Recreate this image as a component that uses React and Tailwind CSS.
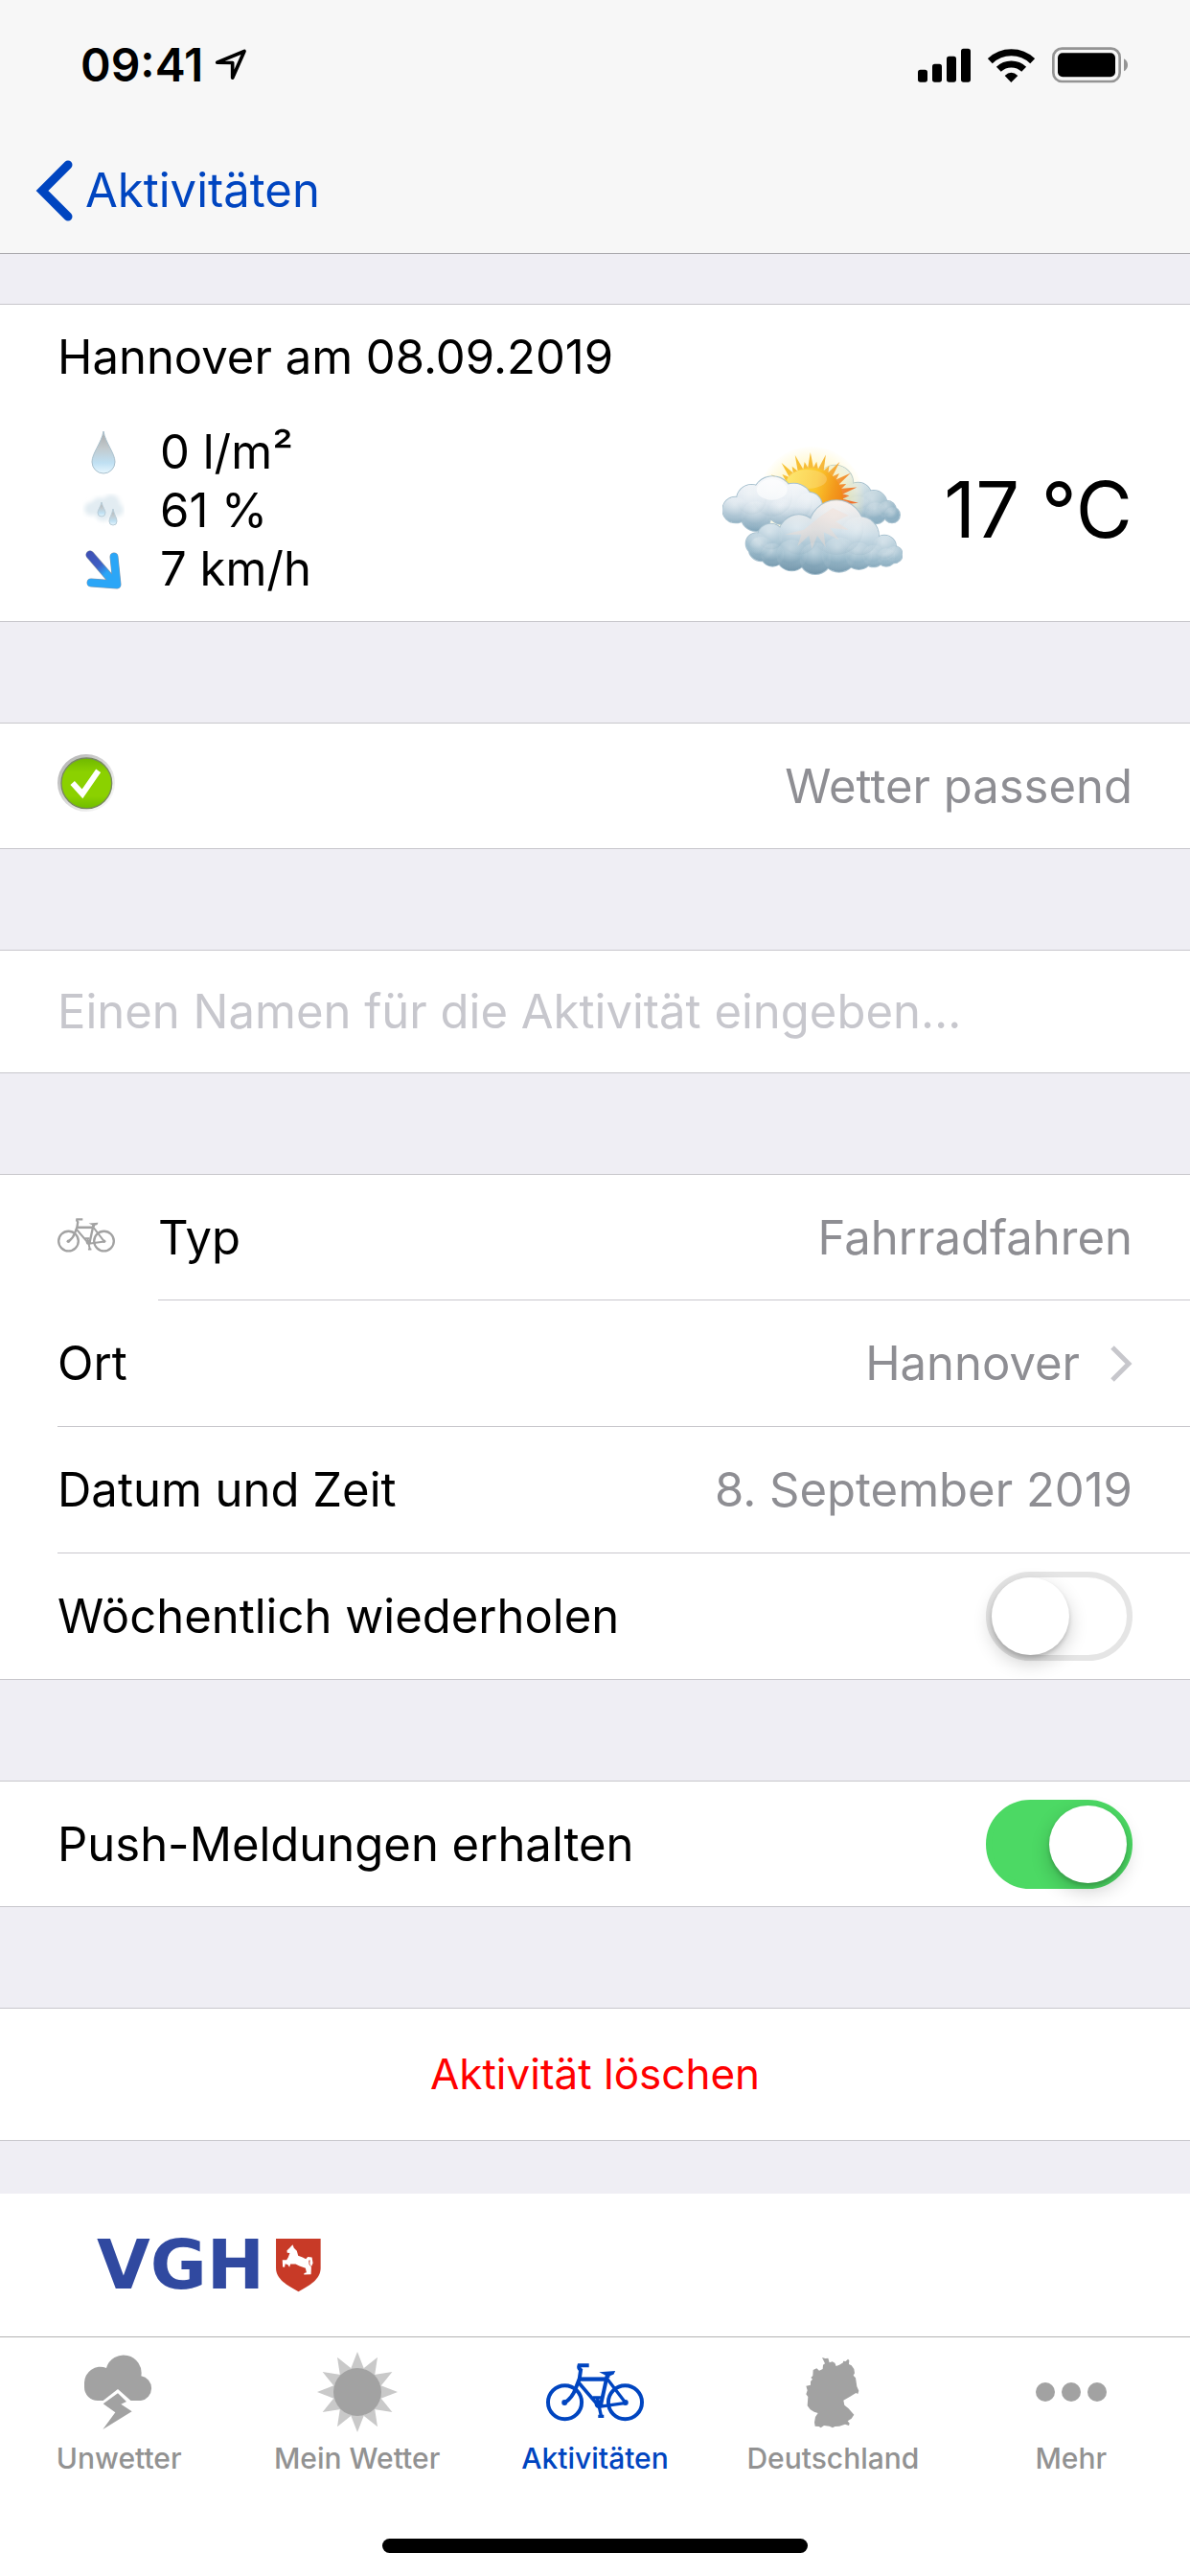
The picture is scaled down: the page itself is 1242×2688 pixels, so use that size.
import React, { useState } from 'react';

// ─── Status bar icons ─────────────────────────────────────────────────────────

const LocationIcon = () => (
  <svg width="34" height="33" viewBox="672 154 102 98" fill="none" aria-hidden="true">
    <path d="M680 196 L765 161 L728 244 V197 Z" stroke="#000" strokeWidth="11" strokeLinejoin="round" />
  </svg>
);

const SignalIcon = () => (
  <svg width="55" height="36" viewBox="174 88 165 108" aria-hidden="true">
    <rect x="174" y="156" width="30" height="39" rx="8" />
    <rect x="219" y="138" width="30" height="57" rx="8" />
    <rect x="264" y="114" width="30" height="81" rx="8" />
    <rect x="309" y="90" width="30" height="105" rx="8" />
  </svg>
);

const WifiIcon = () => (
  <svg width="49" height="36" viewBox="393 87 147 108" fill="none" aria-hidden="true">
    <path d="M400 128 A96 96 0 0 1 533 128" stroke="#000" strokeWidth="21" />
    <path d="M427 154 A57 57 0 0 1 506 154" stroke="#000" strokeWidth="21" />
    <path d="M446 174 Q466 155 487 174 L466 195 Z" fill="#000" />
  </svg>
);

const BatteryIcon = () => (
  <svg width="79" height="38" viewBox="594 86 237 114" aria-hidden="true">
    <rect x="598" y="91" width="208" height="103" rx="27" fill="none" stroke="#949494" strokeWidth="8" />
    <rect x="612" y="105" width="180" height="75" rx="15" />
    <path d="M819 123 Q831 130 831 142 Q831 155 819 162 Z" fill="#949494" />
  </svg>
);

// ─── Weather icons ────────────────────────────────────────────────────────────

const DropIcon = () => (
  <svg width="26" height="46" viewBox="0 0 26 46" aria-hidden="true">
    <defs>
      <linearGradient id="drop" x1="0" y1="0" x2="0" y2="1">
        <stop offset="0" stopColor="#a9a9a9" />
        <stop offset="0.4" stopColor="#c2cace" />
        <stop offset="0.75" stopColor="#bfe0f3" />
        <stop offset="1" stopColor="#e8f7fe" />
      </linearGradient>
    </defs>
    <path d="M13 1 C15 13 25 24 25 33 A12 12 0 0 1 1 33 C1 24 11 13 13 1 Z" fill="url(#drop)" stroke="#a9c0cd" />
  </svg>
);

const HumidityIcon = () => (
  <svg width="44" height="36" viewBox="0 0 44 36" aria-hidden="true">
    <defs>
      <filter id="mist" x="-20%" y="-20%" width="140%" height="140%">
        <feGaussianBlur stdDeviation="2" />
      </filter>
    </defs>
    <g fill="#e2ecf2" filter="url(#mist)">
      <circle cx="9" cy="16" r="7" />
      <circle cx="18" cy="13" r="9" />
      <circle cx="30" cy="10" r="9" />
      <circle cx="36" cy="17" r="7" />
      <circle cx="22" cy="20" r="9" />
    </g>
    <path d="M20 9 C21 14 24 17 24 20 A4 4 0 0 1 16 20 C16 17 19 14 20 9 Z" fill="url(#drop)" stroke="#b9cdd8" />
    <path d="M32 16 C33 22 36 25 36 29 A4 4 0 0 1 28 29 C28 25 31 22 32 16 Z" fill="url(#drop)" stroke="#b9cdd8" />
  </svg>
);

const WindIcon = () => (
  <svg width="42" height="42" viewBox="0 0 42 42" fill="none" aria-hidden="true">
    <defs>
      <linearGradient id="wind" gradientUnits="userSpaceOnUse" x1="5" y1="5" x2="30" y2="32">
        <stop offset="0" stopColor="#3f51b5" />
        <stop offset="0.45" stopColor="#3f5fc4" />
        <stop offset="0.75" stopColor="#2ba6f7" />
      </linearGradient>
    </defs>
    <g strokeLinecap="round" strokeLinejoin="round">
      <path d="M7 6 L32 35 M32 8 L35 37 L8 35" stroke="#8a97a8" strokeWidth="9" />
      <path d="M7 6 L32 35" stroke="url(#wind)" strokeWidth="8" />
      <path d="M32 8 L35 37 L8 35" stroke="#2ba6f7" strokeWidth="8" />
    </g>
  </svg>
);

const BACK_CLOUD = [
  [448, 185, 56], [520, 224, 41], [568, 250, 42], [610, 268, 28], [626, 284, 24], [575, 278, 33], [520, 270, 44],
];
const LEFT_CLOUD = [
  [136, 268, 40], [186, 236, 46], [252, 226, 62], [318, 244, 58], [366, 254, 40], [200, 288, 46], [280, 272, 40],
];
const FRONT_CLOUD = [
  [202, 374, 33], [216, 390, 38], [252, 408, 36], [386, 420, 49], [312, 410, 48], [460, 408, 54], [522, 412, 42],
  [568, 412, 34], [608, 416, 28], [632, 408, 26], [602, 384, 36], [246, 352, 40], [334, 346, 62], [524, 350, 60],
  [452, 324, 85],
];

const Cloud = ({ puffs, fill }) => (
  <g>
    {puffs.map(([cx, cy, r]) => (
      <circle key={`o${cx}-${cy}`} cx={cx} cy={cy} r={r + 1} fill="none" stroke="#a9c2d0" strokeWidth="4" />
    ))}
    {puffs.map(([cx, cy, r]) => (
      <circle key={`f${cx}-${cy}`} cx={cx} cy={cy} r={r} fill={fill} />
    ))}
    {puffs.map(([cx, cy, r]) => (
      <circle key={`h${cx}-${cy}`} cx={cx} cy={cy} r={r} fill="url(#puff)" />
    ))}
  </g>
);

const sunRay = (deg, length, half) => {
  const point = (radius, offset) => {
    const a = ((deg + offset) * Math.PI) / 180;
    return `${(373 + radius * Math.cos(a)).toFixed(1)},${(236 - radius * Math.sin(a)).toFixed(1)}`;
  };
  return `${point(94, -half)} ${point(length, 0)} ${point(94, half)}`;
};

const WeatherIcon = () => (
  <svg width="188" height="134" viewBox="95 70 564 402" role="img" aria-label="Wolkig mit Sonne">
    <defs>
      <linearGradient id="rays" gradientUnits="userSpaceOnUse" x1="300" y1="110" x2="500" y2="240">
        <stop offset="0" stopColor="#f7c331" />
        <stop offset="0.5" stopColor="#f6b63c" />
        <stop offset="1" stopColor="#f0702c" />
      </linearGradient>
      <linearGradient id="sun" gradientUnits="userSpaceOnUse" x1="290" y1="190" x2="475" y2="235">
        <stop offset="0" stopColor="#fde14a" />
        <stop offset="0.5" stopColor="#fbc62c" />
        <stop offset="0.8" stopColor="#f39a1c" />
        <stop offset="1" stopColor="#f08416" />
      </linearGradient>
      <radialGradient id="glow" gradientUnits="userSpaceOnUse" cx="373" cy="236" r="170">
        <stop offset="0.5" stopColor="#fff2a8" />
        <stop offset="1" stopColor="#fff2a8" stopOpacity="0" />
      </radialGradient>
      <linearGradient id="cloudBack" gradientUnits="userSpaceOnUse" x1="500" y1="160" x2="540" y2="310">
        <stop offset="0" stopColor="#e6eff0" />
        <stop offset="1" stopColor="#88acc0" />
      </linearGradient>
      <linearGradient id="cloudLeft" gradientUnits="userSpaceOnUse" x1="250" y1="165" x2="235" y2="335">
        <stop offset="0" stopColor="#f8f9fb" />
        <stop offset="0.5" stopColor="#dbe5ed" />
        <stop offset="1" stopColor="#80a5ba" />
      </linearGradient>
      <linearGradient id="cloudFront" gradientUnits="userSpaceOnUse" x1="410" y1="240" x2="390" y2="470">
        <stop offset="0" stopColor="#f6efec" />
        <stop offset="0.4" stopColor="#cbdce6" />
        <stop offset="0.75" stopColor="#93b5c7" />
        <stop offset="1" stopColor="#6a8fa5" />
      </linearGradient>
      <radialGradient id="puff" cx="0.45" cy="0.3" r="0.75">
        <stop offset="0" stopColor="#fff" stopOpacity="0.35" />
        <stop offset="0.6" stopColor="#fff" stopOpacity="0.04" />
        <stop offset="1" stopColor="#7096ad" stopOpacity="0.24" />
      </radialGradient>
    </defs>
    <Cloud puffs={BACK_CLOUD} fill="url(#cloudBack)" />
    <circle cx="373" cy="236" r="166" fill="url(#glow)" opacity="0.75" />
    <g fill="url(#rays)">
      {[148, 129, 110, 91, 72, 53, 34, 15, -4].map((deg) => (
        <polygon key={deg} points={sunRay(deg, 148, 6)} />
      ))}
      {[139, 120, 100, 82, 62, 43, 24, 6].map((deg) => (
        <polygon key={deg} points={sunRay(deg, 120, 6)} />
      ))}
    </g>
    <circle cx="373" cy="236" r="100" fill="url(#sun)" />
    <ellipse cx="360" cy="172" rx="62" ry="30" fill="#fff" opacity="0.2" />
    <Cloud puffs={LEFT_CLOUD} fill="url(#cloudLeft)" />
    <ellipse cx="250" cy="205" rx="48" ry="32" fill="#fff" opacity="0.6" />
    <Cloud puffs={FRONT_CLOUD} fill="url(#cloudFront)" />
    <path
      d="M290 345 L350 330 L400 290 L440 262 L490 285 L450 305 L490 330 L432 325 L460 362 L412 338 L418 385 L392 348 L375 390 L366 348 L330 382 L342 345 Z"
      fill="#f6dccf"
      opacity="0.4"
    />
  </svg>
);

const CheckIcon = () => (
  <svg width="60" height="66" viewBox="60 140 180 198" role="img" aria-label="In Ordnung">
    <defs>
      <linearGradient id="rim" x1="0" y1="0" x2="1" y2="1">
        <stop offset="0.2" stopColor="#bdbdbd" />
        <stop offset="0.8" stopColor="#f3f3f3" />
      </linearGradient>
      <linearGradient id="ok" x1="0" y1="0" x2="0" y2="1">
        <stop offset="0" stopColor="#6fb800" />
        <stop offset="0.28" stopColor="#8bd100" />
        <stop offset="0.75" stopColor="#8bd100" />
        <stop offset="1" stopColor="#6fbd00" />
      </linearGradient>
    </defs>
    <circle cx="150" cy="230" r="90" fill="url(#rim)" />
    <circle cx="151" cy="231" r="79" fill="url(#ok)" stroke="#77885f" strokeWidth="4" />
    <path d="M107 230 L138 264 L188 192" fill="none" stroke="#fff" strokeWidth="18" />
  </svg>
);

// ─── Tab icons ────────────────────────────────────────────────────────────────

const BikeIcon = ({ className }) => (
  <svg className={className} viewBox="56 77 308 182" fill="none" stroke="currentColor" aria-hidden="true">
    <circle cx="115" cy="199" r="53" strokeWidth="12" />
    <circle cx="305" cy="199" r="53" strokeWidth="12" />
    <path d="M191 83 H160 Q157 91 165 97 L161 124 L148 158 Q139 184 114 201" strokeWidth="12" />
    <path d="M158 126 H252" strokeWidth="13" />
    <path d="M156 134 L216 204 L228 212" strokeWidth="11" />
    <path d="M249 112 L228 208" strokeWidth="12" />
    <path d="M249 126 L305 199" strokeWidth="10" />
    <path d="M222 213 L308 201" strokeWidth="10" />
    <path d="M203 184 H228 M217 186 L229 240 M220 243 H238" strokeWidth="10" />
    <circle cx="114" cy="200" r="9" fill="currentColor" stroke="none" />
    <circle cx="306" cy="200" r="9" fill="currentColor" stroke="none" />
    <circle cx="222" cy="205" r="13" fill="currentColor" stroke="none" />
    <path d="M223 104 L274 100 L269 111 L257 116 L256 122 H243 V114 Z" fill="currentColor" stroke="none" />
  </svg>
);

const StormIcon = () => (
  <svg width="72" height="78" viewBox="144 111 216 234" fill="currentColor" aria-hidden="true">
    <path d="M186 255 A42 42 0 0 1 144 213 V200 A50 50 0 0 1 213 153 A56 56 0 0 1 322 178 A39 39 0 0 1 321 255 Z" />
    <path d="M249 219 L292 257 L274 274 L200 257 Z" fill="#fff" />
    <path d="M249 232 L276 258 L259 266 L293 289 L202 345 L241 292 L203 265 Z" />
  </svg>
);

const SunIcon = () => (
  <svg width="84" height="84" viewBox="-42 -42 84 84" aria-hidden="true">
    {[0, 30, 60, 90, 120, 150, 180, 210, 240, 270, 300, 330].map((deg) => (
      <polygon key={deg} points="-7,-24 0,-42 7,-24" fill="#c9c9c9" transform={`rotate(${deg})`} />
    ))}
    <circle r="25" fill="currentColor" />
  </svg>
);

const GermanyIcon = () => (
  <svg width="56" height="75" viewBox="871 56 168 225" fill="currentColor" aria-hidden="true">
    <path d="M922 59 L932 62 L941 61 L945 75 L954 72 L962 76 L966 86 L976 82 L988 75 L988 70 L996 71 L1003 64 L1007 68 L1006 80 L1014 84 L1022 95 L1024 108 L1020 115 L1027 123 L1031 150 L1037 163 L1034 173 L1028 170 L1010 181 L989 193 L992 208 L1005 219 L1022 238 L1014 250 L1002 258 L1008 265 L1006 272 L994 268 L976 274 L962 275 L955 279 L945 274 L928 272 L918 279 L912 275 L900 274 L898 262 L901 245 L909 233 L897 229 L885 222 L876 210 L878 182 L872 174 L876 162 L872 148 L886 145 L886 134 L892 127 L887 122 L893 116 L894 98 L905 93 L913 100 L924 95 L925 82 L931 78 Z" />
  </svg>
);

const MoreIcon = () => (
  <svg width="74" height="20" viewBox="0 0 74 20" fill="currentColor" aria-hidden="true">
    <circle cx="10" cy="10" r="10" />
    <circle cx="37" cy="10" r="10" />
    <circle cx="64" cy="10" r="10" />
  </svg>
);

const VghShield = () => (
  <svg width="47" height="56" viewBox="695 204 140 167" aria-hidden="true">
    <path d="M695 204 H834 V296 C834 330 800 350 765 369 C730 350 695 330 695 296 Z" fill="#c83a27" />
    <path
      d="M729 241 L738 232 L747 223 L751 233 L760 242 L764 257 L778 262 L788 267 L794 261 L807 262 L810 280 L805 291 L800 282 L801 270 L797 272 L798 284 L805 293 L804 315 L782 316 L783 311 L790 309 L787 296 L768 289 L756 283 L740 283 L737 293 L732 285 L724 282 L722 293 L716 292 L715 270 L728 270 L733 262 L738 249 L730 248 Z"
      fill="#fff"
    />
  </svg>
);

// ─── Building blocks ──────────────────────────────────────────────────────────

const Group = ({ children }) => (
  <section className="border-y border-[#c8c7cc] bg-white">{children}</section>
);

const Switch = ({ id, checked, onChange }) => (
  <input
    id={id}
    type="checkbox"
    role="switch"
    checked={checked}
    onChange={(e) => onChange(e.target.checked)}
    className="h-[93px] w-[153px] shrink-0 appearance-none rounded-full border-6 border-[#e5e5e5] bg-white before:block before:size-[81px] before:rounded-full before:bg-white before:shadow-[0_8px_20px_rgba(0,0,0,0.2),0_3px_4px_rgba(0,0,0,0.16)] checked:border-[#4cd964] checked:bg-[#4cd964] checked:pl-[60px]"
  />
);

const TABS = [
  { label: 'Unwetter', icon: <StormIcon /> },
  { label: 'Mein Wetter', icon: <SunIcon /> },
  { label: 'Aktivitäten', icon: <BikeIcon className="h-[61px] w-[102px]" />, active: true },
  { label: 'Deutschland', icon: <GermanyIcon /> },
  { label: 'Mehr', icon: <MoreIcon /> },
];

const MEASUREMENTS = [
  { text: '0 l/m²', icon: <DropIcon /> },
  { text: '61 %', icon: <HumidityIcon /> },
  { text: '7 km/h', icon: <WindIcon /> },
];

const App = () => {
  const [name, setName] = useState('');
  const [weekly, setWeekly] = useState(false);
  const [push, setPush] = useState(true);

  return (
    <div className="flex min-h-screen flex-col bg-[#efeef4] font-['Inter','Liberation_Sans',sans-serif] text-[49px] leading-[61px] text-black">
      {/* ── Header ─────────────────────────────────────────────── */}
      <header className="border-b border-[#a9a9ac] bg-[#f7f7f7]">
        <div className="flex h-[135px] items-center justify-between pr-[65px] pl-[84px]">
          <div className="flex items-center gap-3">
            <span className="text-[48px] font-semibold">09:41</span>
            <LocationIcon />
          </div>
          <div className="flex items-center gap-[18px]">
            <SignalIcon />
            <WifiIcon />
            <BatteryIcon />
          </div>
        </div>
        <nav className="flex h-[129px] items-center pb-[2px] pl-[36px]">
          <a href="#aktivitaeten" className="flex items-center gap-[13px] text-[#0045c0]">
            <svg width="40" height="66" viewBox="0 0 40 66" fill="none" aria-hidden="true">
              <path d="M35 6 L8 33 L35 60" stroke="currentColor" strokeWidth="9" strokeLinecap="round" strokeLinejoin="miter" />
            </svg>
            Aktivitäten
          </a>
        </nav>
      </header>

      <main className="flex flex-col gap-[105px] pt-[52px]">
        {/* ── Forecast ─────────────────────────────────────────── */}
        <Group>
          <div className="px-[60px] pt-6 pb-6">
            <h1>Hannover am 08.09.2019</h1>
            <div className="mt-[38px] flex items-center justify-between">
              <ul className="pl-[21px]">
                {MEASUREMENTS.map((item) => (
                  <li key={item.text} className="flex items-center gap-8">
                    <span className="flex w-[54px] justify-center">{item.icon}</span>
                    {item.text}
                  </li>
                ))}
              </ul>
              <div className="flex items-center gap-[43px]">
                <WeatherIcon />
                <span className="text-[81px]">17 °C</span>
              </div>
            </div>
          </div>
        </Group>

        <Group>
          <div className="flex h-[130px] items-center justify-between px-[60px]">
            <CheckIcon />
            <span className="text-[#8e8e93]">Wetter passend</span>
          </div>
        </Group>

        <Group>
          <input
            type="text"
            aria-label="Name der Aktivität"
            value={name}
            onChange={(e) => setName(e.target.value)}
            placeholder="Einen Namen für die Aktivität eingeben…"
            className="block h-[127px] w-full px-[60px] outline-none placeholder:text-[#c7c7cd]"
          />
        </Group>

        {/* ── Activity details ─────────────────────────────────── */}
        <Group>
          <button type="button" className="flex w-full items-center gap-[45px] pl-[60px]">
            <span className="flex h-[42px] w-[60px] items-start text-[#a2a2a2]">
              <BikeIcon className="h-[36px] w-[60px]" />
            </span>
            <span className="flex h-[131px] flex-1 items-center justify-between border-b border-[#c8c7cc] pr-[60px]">
              Typ
              <span className="text-[#8e8e93]">Fahrradfahren</span>
            </span>
          </button>
          <a href="#ort" className="ml-[60px] flex h-[132px] items-center border-b border-[#c8c7cc] pr-[60px]">
            Ort
            <span className="ml-auto text-[#8e8e93]">Hannover</span>
            <svg className="ml-[31px]" width="24" height="40" viewBox="0 0 24 40" fill="none" aria-hidden="true">
              <path d="M3 3 L20 20 L3 37" stroke="#c7c7cc" strokeWidth="5" />
            </svg>
          </a>
          <div className="pl-[60px]">
            <button
              type="button"
              className="flex h-[132px] w-full items-center justify-between border-b border-[#c8c7cc] pr-[60px]"
            >
              Datum und Zeit
              <span className="text-[#8e8e93]">8. September 2019</span>
            </button>
          </div>
          <div className="flex h-[131px] items-center justify-between px-[60px]">
            <label htmlFor="weekly">Wöchentlich wiederholen</label>
            <Switch id="weekly" checked={weekly} onChange={setWeekly} />
          </div>
        </Group>

        <Group>
          <div className="flex h-[130px] items-center justify-between px-[60px]">
            <label htmlFor="push">Push-Meldungen erhalten</label>
            <Switch id="push" checked={push} onChange={setPush} />
          </div>
        </Group>

        <Group>
          <button type="button" className="h-[137px] w-full text-[44px] text-[#ff0000]">
            Aktivität löschen
          </button>
        </Group>
      </main>

      {/* ── Sponsor and tab bar ────────────────────────────────── */}
      <footer className="mt-auto bg-white">
        <div className="flex h-[149px] items-center gap-3 px-[101px]">
          <span className="font-['DejaVu_Sans',sans-serif] text-[72px] font-bold text-[#3049a0]">VGH</span>
          <VghShield />
        </div>
        <nav className="grid grid-cols-5 border-t border-[#b2b2b2] pt-3">
          {TABS.map((tab) => (
            <a
              key={tab.label}
              href={`#${tab.label}`}
              aria-current={tab.active ? 'page' : undefined}
              className={`flex flex-col items-center gap-[6px] text-[30px] leading-[36px] font-medium ${
                tab.active ? 'text-[#0045c0]' : 'text-[#929292]'
              }`}
            >
              <span className={`flex h-[90px] items-center ${tab.active ? '' : 'text-[#a2a2a2]'}`}>{tab.icon}</span>
              {tab.label}
            </a>
          ))}
        </nav>
        <div className="flex justify-center pt-[66px] pb-6">
          <div className="h-[15px] w-[444px] rounded-full bg-black" />
        </div>
      </footer>
    </div>
  );
};

export default App;
